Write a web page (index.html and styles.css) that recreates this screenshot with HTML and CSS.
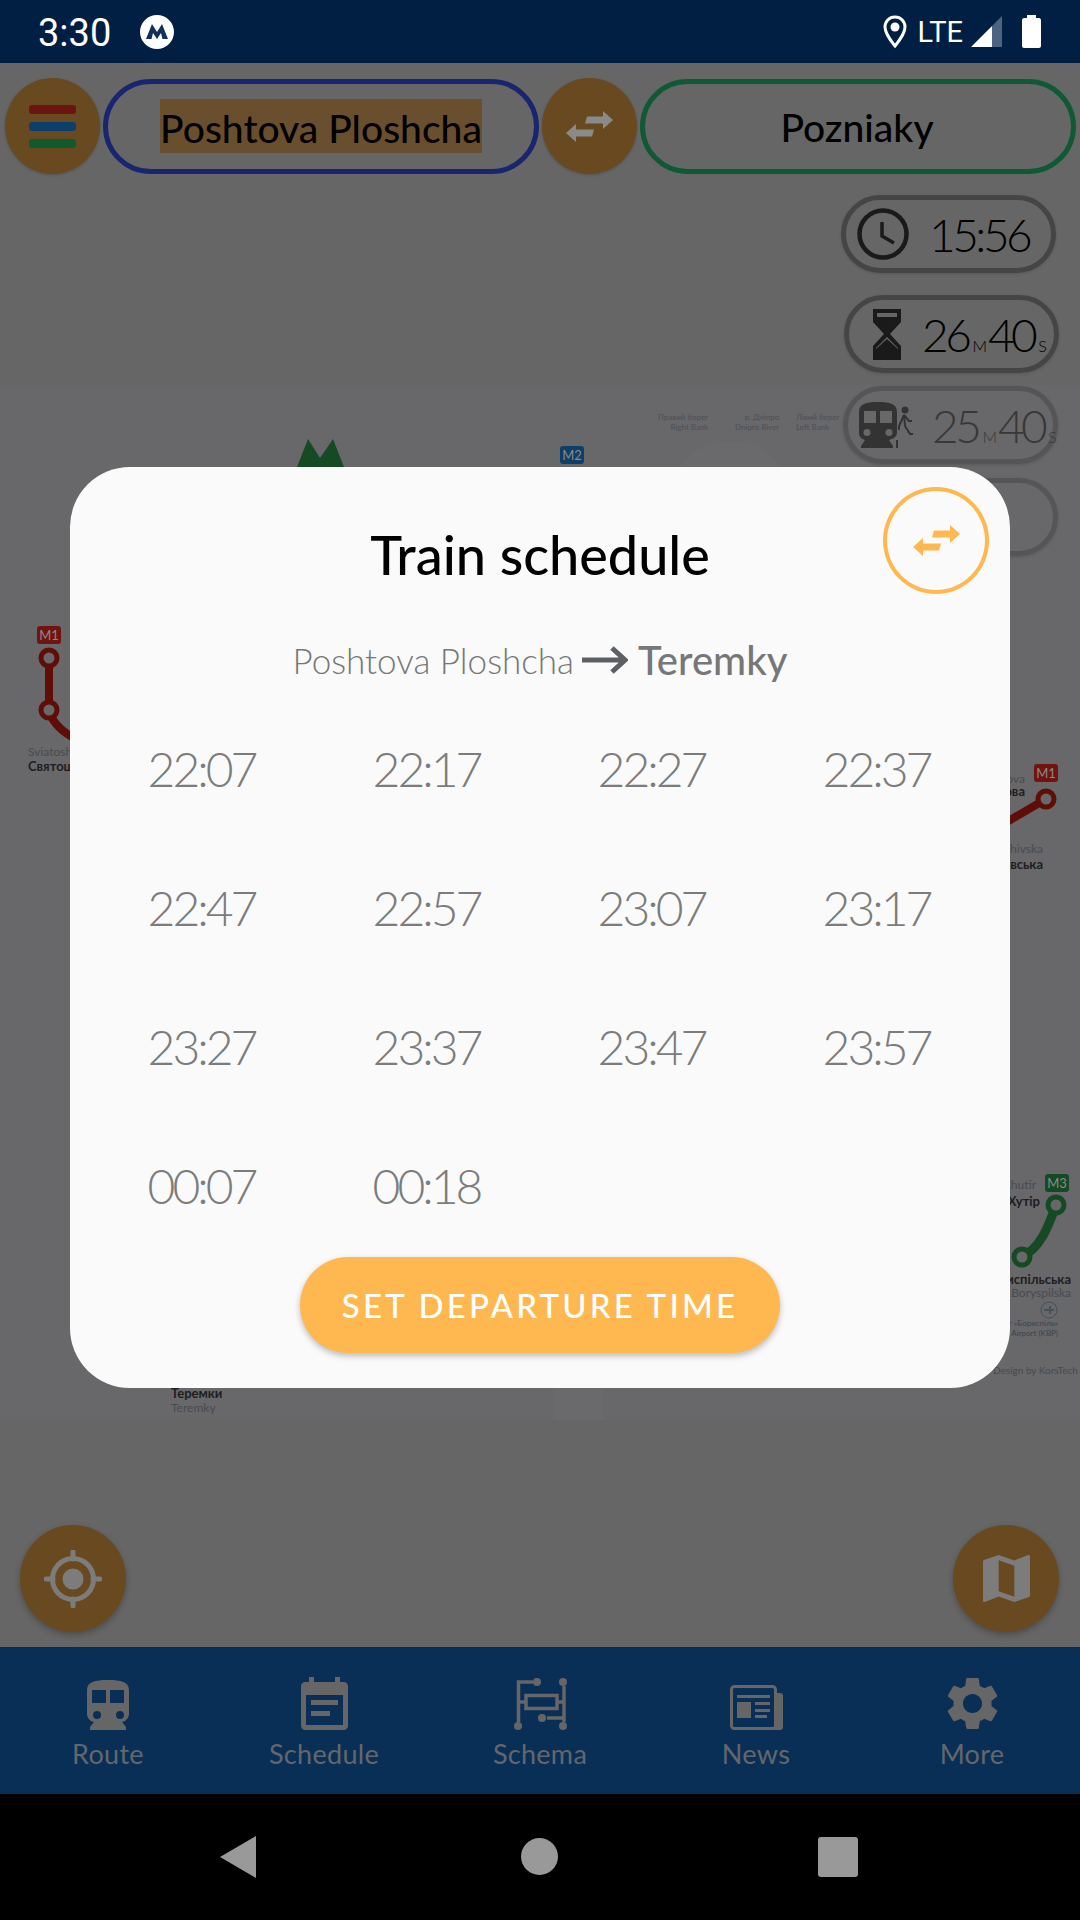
FILE: index.html
```html
<!DOCTYPE html>
<html>
<head>
  <meta charset="utf-8">
  <title>Train schedule</title>
  <link rel="stylesheet" href="styles.css">
</head>
<body>
  <!-- STATUS BAR -->
  <div class="status">
    <span class="clock">3:30</span>
    <svg class="status-logo" viewBox="0 0 34 34">
      <circle cx="17" cy="17" r="17" fill="#fff"/>
      <path d="M6 24 L12 9 L17 17 L22 9 L28 24 H22.5 L21 18 L17 24 L13 18 L11.5 24Z" fill="#12305a"/>
    </svg>
    <span class="status-space"></span>
    <svg class="status-pin" viewBox="0 0 24 34">
      <path d="M12 2C6 2 2 6.500 2 12C2 19 12 31 12 31C12 31 22 19 22 12C22 6.500 18 2 12 2Z" fill="none" stroke="#fff" stroke-width="3"/>
      <circle cx="12" cy="12" r="4.500" fill="#fff"/>
    </svg>
    <span class="lte">LTE</span>
    <svg class="status-signal" viewBox="0 0 31 31">
      <path d="M31 0V31H21V10Z" fill="#4d6480"/>
      <path d="M21 10V31H0Z" fill="#fff"/>
    </svg>
    <svg class="status-battery" viewBox="0 0 19 33">
      <path d="M5 0H14V3H17C18 3 19 4 19 5V31C19 32 18 33 17 33H2C1 33 0 32 0 31V5C0 4 1 3 2 3H5Z" fill="#fff"/>
    </svg>
  </div>

  <div class="main">
    <!-- MAP -->
    <div class="map">
      <svg class="map-lines" viewBox="0 0 1080 1584">
        <rect x="0" y="322" width="1080" height="1035" fill="#68676a"/>
        <path d="M680 404 C700 370 760 370 780 404" fill="#6a696b"/>
        <rect x="554" y="1300" width="49" height="57" fill="#6a6a6c"/>
        <path d="M297 404 L308 376 L320 395 L333 376 L344 404Z" fill="#164a24"/>
        <path d="M49 595 V647 M49 647 C52 660 62 668 72 674" fill="none" stroke="#5f0e07" stroke-width="8"/>
        <circle cx="49" cy="595" r="8" fill="#68676a" stroke="#5f0e07" stroke-width="5"/>
        <circle cx="49" cy="647" r="8" fill="#68676a" stroke="#5f0e07" stroke-width="5"/>
        <path d="M1046 736 L1005 760" fill="none" stroke="#5f0e07" stroke-width="8"/>
        <circle cx="1046" cy="736" r="8" fill="#68676a" stroke="#5f0e07" stroke-width="5"/>
        <path d="M1056 1142 C1048 1165 1040 1185 1022 1194" fill="none" stroke="#164a24" stroke-width="9"/>
        <circle cx="1056" cy="1142" r="8" fill="#68676a" stroke="#164a24" stroke-width="5"/>
        <circle cx="1022" cy="1194" r="8" fill="#68676a" stroke="#164a24" stroke-width="5"/>
        <circle cx="1049" cy="1247" r="8" fill="none" stroke="#44505c" stroke-width="1"/>
        <path d="M1044 1247 H1054 M1050 1243 V1251" stroke="#44505c" stroke-width="2"/>
      </svg>
      <span class="line-badge badge-m1a">M1</span>
      <span class="line-badge badge-m1b">M1</span>
      <span class="line-badge badge-m2">M2</span>
      <span class="line-badge badge-m3">M3</span>

      <span class="st-en st-sv-en">Sviatoshyn</span>
      <span class="st-uk st-sv-uk">Святошин</span>
      <span class="st-en st-right st-li-en">Lisova</span>
      <span class="st-uk st-right st-li-uk">Лісова</span>
      <span class="st-en st-right st-ch-en">Chernihivska</span>
      <span class="st-uk st-right st-ch-uk">Чернігівська</span>
      <span class="st-en st-right st-kh-en">Chervonyi Khutir</span>
      <span class="st-uk st-right st-kh-uk">Хутір</span>
      <span class="st-uk st-right st-bo-uk">Бориспільська</span>
      <span class="st-en st-right st-bo-en">Boryspilska</span>
      <span class="st-tiny st-right st-air-uk">Аеропорт «Бориспіль»</span>
      <span class="st-tiny st-right st-air-en">Boryspil Airport (KBP)</span>
      <span class="st-credit">Design by KorsTech</span>
      <span class="st-uk st-te-uk">Теремки</span>
      <span class="st-en st-te-en">Teremky</span>

      <span class="st-tiny st-bank bank-a">Правий берег<br>Right Bank</span>
      <span class="st-tiny st-bank bank-b">р. Дніпро<br>Dnipro River</span>
      <span class="st-tiny st-bank bank-c">Лівий берег<br>Left Bank</span>
    </div>

    <!-- TOP ROW -->
    <div class="top-row">
      <div class="round-btn menu-btn">
        <span class="bar bar-red"></span>
        <span class="bar bar-blue"></span>
        <span class="bar bar-green"></span>
      </div>
      <div class="station-pill pill-from"><span class="hl">Poshtova Ploshcha</span></div>
      <div class="round-btn">
        <svg class="swap-icon" viewBox="0 0 47 33"><path d="M21 6.500H37V1L47 10L37 19V13.500H19ZM0 23L10 14V19.500H28L26 26.500H10V32Z" fill="#8a8a8a"/></svg>
      </div>
      <div class="station-pill pill-to"><span>Pozniaky</span></div>
    </div>

    <!-- TIME PILLS -->
    <div class="info-list">
      <div class="info-pill clock-pill">
        <svg class="info-icon" viewBox="0 0 52 52">
          <circle cx="26" cy="26" r="23.500" fill="none" stroke="#1a1a1a" stroke-width="4.500"/>
          <path d="M25 14V28L37 35" fill="none" stroke="#1a1a1a" stroke-width="3.500"/>
        </svg>
        <span class="info-time">15:56</span>
      </div>
      <div class="info-pill wait-pill">
        <svg class="info-icon hourglass" viewBox="0 0 32 53">
          <path d="M2 1H30V14L19 26L30 38V52H2V38L13 26L2 14ZM6 5V9H26V5Z" fill="#1a1a1a" fill-rule="evenodd"/>
          <path d="M16 31L27 41V40L16 29L5 40V41Z" fill="#666"/>
        </svg>
        <span class="info-time">26<small>M</small>40<small>S</small></span>
      </div>
      <div class="info-pill ride-pill">
        <svg class="info-icon train-walk" viewBox="0 0 54 46">
          <path d="M19 0C7 0 0 2 0 10V31C0 35 3 37 6 38L2 44V46H34V44L30 38C33 37 38 35 38 31V10C38 2 31 0 19 0ZM5 9H17V21H5ZM21 9H33V21H21ZM8 27A3.500 3.500 0 1 1 8 34A3.500 3.500 0 1 1 8 27ZM30 27A3.500 3.500 0 1 1 30 34A3.500 3.500 0 1 1 30 27Z" fill="#333" fill-rule="evenodd"/>
          <circle cx="46" cy="8" r="3.500" fill="#333"/>
          <path d="M45 13L40 24V28M45 13L50 19H53M45 13L46 24L51 32H58M38 38V46" fill="none" stroke="#333" stroke-width="2"/>
        </svg>
        <span class="info-time dim">25<small>M</small>40<small>S</small></span>
      </div>
      <div class="info-pill extra-pill"></div>
    </div>

    <!-- FLOATING BUTTONS -->
    <div class="fab-row">
      <div class="fab">
        <svg class="fab-target" viewBox="0 0 58 58">
          <circle cx="29" cy="29" r="20.500" fill="none" stroke="#7c7c7c" stroke-width="5"/>
          <circle cx="29" cy="29" r="10.500" fill="#7c7c7c"/>
          <path d="M29 2V9M29 49V56M2 29H9M49 29H56" stroke="#7c7c7c" stroke-width="5" stroke-linecap="round"/>
        </svg>
      </div>
      <div class="fab">
        <svg class="fab-map" viewBox="3 3 18 18">
          <path d="M20.500 3l-.16.03L15 5.100 9 3 3.360 4.900c-.21.070-.36.250-.36.480V20.500c0 .28.220.5.5.5l.16-.03L9 18.900l6 2.100 5.640-1.900c.21-.070.36-.25.36-.48V3.500c0-.28-.22-.5-.5-.5zM15 19l-6-2.110V5l6 2.110V19z" fill="#7c7c7c"/>
        </svg>
      </div>
    </div>
  </div>

  <!-- BOTTOM TABS -->
  <div class="tabs">
    <div class="tab">
      <svg class="tab-icon" width="42" height="50" viewBox="0 0 42 50">
        <path d="M21 0C8 0 0 2 0 10V34C0 38 4 42 7 42L3 47V50H39V47L35 42C38 42 42 38 42 34V10C42 2 34 0 21 0ZM5 10H19V23H5ZM23 10H37V23H23ZM10 31A4 4 0 1 1 10 39A4 4 0 1 1 10 31ZM33 31A4 4 0 1 1 33 39A4 4 0 1 1 33 31Z" fill="#666" fill-rule="evenodd"/>
      </svg>
      <span>Route</span>
    </div>
    <div class="tab">
      <svg class="tab-icon" width="47" height="53" viewBox="0 0 47 53">
        <path d="M8 0H13V5H34V0H39V5H43C45 5 47 7 47 9V49C47 51 45 53 43 53H4C2 53 0 51 0 49V9C0 7 2 5 4 5H8ZM5 18V48H42V18ZM10 23H37V28H10ZM10 34H29V39H10Z" fill="#666" fill-rule="evenodd"/>
      </svg>
      <span>Schedule</span>
    </div>
    <div class="tab">
      <svg class="tab-icon" width="53" height="52" viewBox="0 0 53 52">
        <g fill="#666">
          <circle cx="23" cy="4" r="4"/><circle cx="49" cy="4" r="4"/>
          <circle cx="4" cy="48" r="4"/><circle cx="49" cy="48" r="4"/>
          <circle cx="28" cy="40" r="4"/>
        </g>
        <path d="M19 4H4.500V44M4.500 24H11M50 8V40M43 24H50M33 40H50M50 40V44" fill="none" stroke="#666" stroke-width="3.500"/>
        <rect x="12" y="17.500" width="31" height="13" fill="none" stroke="#666" stroke-width="3.500"/>
      </svg>
      <span>Schema</span>
    </div>
    <div class="tab">
      <svg class="tab-icon" width="53" height="45" viewBox="0 0 53 45">
        <rect x="1.500" y="1.500" width="44" height="42" rx="3" fill="none" stroke="#666" stroke-width="3"/>
        <path d="M46 8H50C52 8 53 9 53 11V42C53 44 52 45 50 45H44L46 41ZM7 10H40V13H7ZM7 17H21V33H7ZM25 17H40V20H25ZM25 24H40V27H25ZM25 30H37V33H25Z" fill="#666"/>
      </svg>
      <span>News</span>
    </div>
    <div class="tab">
      <svg class="tab-icon" width="51" height="53" viewBox="2.600 2 18.800 20">
        <path d="M19.140 12.940c.04-.3.060-.61.060-.94 0-.32-.02-.64-.07-.94l2.030-1.580c.18-.14.23-.41.12-.61l-1.920-3.320c-.12-.22-.37-.29-.59-.22l-2.390.96c-.5-.38-1.030-.7-1.620-.94l-.36-2.540c-.04-.24-.24-.41-.48-.41h-3.840c-.24 0-.43.17-.47.41l-.36 2.540c-.59.24-1.130.57-1.620.94l-2.390-.96c-.22-.08-.47 0-.59.22L2.740 8.870c-.12.21-.08.47.12.61l2.030 1.580c-.05.3-.09.63-.09.94s.02.64.07.94l-2.030 1.580c-.18.14-.23.41-.12.61l1.920 3.320c.12.22.37.29.59.22l2.390-.96c.5.38 1.030.7 1.620.94l.36 2.540c.05.24.24.41.48.41h3.840c.24 0 .44-.17.47-.41l.36-2.540c.59-.24 1.130-.56 1.620-.94l2.390.96c.22.08.47 0 .59-.22l1.920-3.320c.12-.22.070-.47-.12-.61l-2.010-1.580zM12 15.600c-1.980 0-3.600-1.620-3.600-3.600s1.620-3.600 3.600-3.600 3.600 1.620 3.600 3.600-1.620 3.600-3.600 3.600z" fill="#666"/>
      </svg>
      <span>More</span>
    </div>
  </div>

  <!-- SYSTEM NAV -->
  <div class="sysnav">
    <svg class="sys-back" viewBox="0 0 36 42"><path d="M36 0V42L0 21Z" fill="#999"/></svg>
    <span class="sys-home"></span>
    <span class="sys-square"></span>
  </div>

  <!-- SCHEDULE DIALOG -->
  <div class="dialog">
    <div class="dialog-swap">
      <svg class="swap-icon" viewBox="0 0 47 33"><path d="M21 6.500H37V1L47 10L37 19V13.500H19ZM0 23L10 14V19.500H28L26 26.500H10V32Z" fill="#ffb74f"/></svg>
    </div>
    <h2 class="dialog-title">Train schedule</h2>
    <div class="dialog-route">
      <span>Poshtova Ploshcha</span>
      <svg class="route-arrow" viewBox="0 0 46 30"><path d="M0 15H42M30 3L43 15L30 27" fill="none" stroke="#5c6064" stroke-width="5"/></svg>
      <strong>Teremky</strong>
    </div>
    <div class="times">
      <span>22:07</span><span>22:17</span><span>22:27</span><span>22:37</span>
      <span>22:47</span><span>22:57</span><span>23:07</span><span>23:17</span>
      <span>23:27</span><span>23:37</span><span>23:47</span><span>23:57</span>
      <span>00:07</span><span>00:18</span>
    </div>
    <div class="set-btn">SET DEPARTURE TIME</div>
  </div>
</body>
</html>
```

FILE: styles.css
```css
body {
  margin: 0;
  width: 1080px;
  height: 1920px;
  position: relative;
  display: flex;
  flex-direction: column;
  overflow: hidden;
  font-family: "Lato", sans-serif;
  background: #666;
}

/* status bar */
.status {
  height: 63px;
  background: #001f42;
  display: flex;
  align-items: center;
  padding: 0 39px 0 38px;
  color: #fff;
  font-family: "Roboto", sans-serif;
}
.clock {
  font-size: 38px;
  margin-top: 2px;
}
.status-logo {
  width: 34px;
  height: 34px;
  margin-left: 29px;
}
.status-space {
  flex: 1;
}
.status-pin {
  width: 24px;
  height: 34px;
}
.lte {
  font-size: 29px;
  margin-left: 10px;
}
.status-signal {
  width: 31px;
  height: 31px;
  margin-left: 8px;
}
.status-battery {
  width: 19px;
  height: 33px;
  margin-left: 20px;
}

/* main area */
.main {
  flex: 1;
  position: relative;
  display: flex;
  flex-direction: column;
}
.map {
  position: absolute;
  inset: 0;
}
.map-lines {
  position: absolute;
  left: 0;
  top: 0;
  width: 1080px;
  height: 1584px;
}
.line-badge {
  position: absolute;
  width: 24px;
  height: 18px;
  border-radius: 3px;
  color: #8a8a8a;
  font-size: 13px;
  line-height: 18px;
  text-align: center;
}
.badge-m1a { left: 37px; top: 563px; background: #711310; }
.badge-m1b { left: 1034px; top: 701px; background: #711310; }
.badge-m2 { left: 560px; top: 383px; background: #0e3f68; }
.badge-m3 { left: 1045px; top: 1111px; background: #164a24; }

.st-en, .st-uk, .st-tiny, .st-credit {
  position: absolute;
  white-space: nowrap;
}
.st-en {
  font-size: 12px;
  line-height: 12px;
  color: #474b50;
}
.st-uk {
  font-size: 13px;
  line-height: 12px;
  font-weight: 700;
  color: #1e1e22;
}
.st-tiny {
  font-size: 8px;
  line-height: 8px;
  color: #3c444c;
}
.st-credit {
  left: 993px;
  top: 1301px;
  font-size: 10px;
  color: #464a50;
}
.st-right {
  text-align: right;
}
.st-sv-en { left: 28px; top: 683px; }
.st-sv-uk { left: 28px; top: 697px; }
.st-li-en { right: 55px; top: 710px; }
.st-li-uk { right: 55px; top: 722px; }
.st-ch-en { right: 37px; top: 780px; }
.st-ch-uk { right: 37px; top: 795px; }
.st-kh-en { right: 44px; top: 1116px; }
.st-kh-uk { right: 40px; top: 1132px; }
.st-bo-uk { right: 9px; top: 1210px; }
.st-bo-en { right: 9px; top: 1224px; }
.st-air-uk { right: 22px; top: 1256px; }
.st-air-en { right: 22px; top: 1266px; }
.st-te-uk { left: 171px; top: 1324px; }
.st-te-en { left: 171px; top: 1339px; }
.st-bank {
  top: 349px;
  line-height: 10px;
  text-align: right;
  color: #4c5058;
}
.bank-a { left: 658px; }
.bank-b { left: 735px; }
.bank-c { left: 796px; text-align: left; }

/* top row */
.top-row {
  position: relative;
  display: flex;
  align-items: center;
  gap: 3px;
  padding: 15px 4px 0 5px;
}
.round-btn {
  width: 95px;
  height: 96px;
  flex: none;
  border-radius: 50%;
  background: #694a20;
  box-shadow: 0 1px 3px rgba(0, 0, 0, 0.2);
  display: flex;
  flex-direction: column;
  align-items: center;
  justify-content: center;
}
.menu-btn {
  gap: 8px;
}
.bar {
  width: 47px;
  height: 9px;
  border-radius: 3px;
}
.bar-red { background: #6b1510; }
.bar-blue { background: #0d3f6a; }
.bar-green { background: #115a2e; }
.swap-icon {
  width: 47px;
  height: 33px;
}
.station-pill {
  flex: 1;
  height: 95px;
  box-sizing: border-box;
  border: 5px solid;
  border-radius: 48px;
  display: flex;
  align-items: center;
  justify-content: center;
  font-size: 39px;
  font-weight: 500;
  color: #000;
}
.pill-from { border-color: #1a2570; }
.pill-to { border-color: #0f5a34; }
.pill-to span {
  padding-top: 1px;
  margin-left: -2px;
}
.hl {
  background: #6a4f2e;
  height: 54px;
  line-height: 58px;
}

/* time pills */
.info-list {
  position: relative;
  display: flex;
  flex-direction: column;
  align-items: flex-end;
  margin-top: 21px;
}
.info-pill {
  width: 215px;
  height: 78px;
  box-sizing: border-box;
  border: 5px solid #454545;
  border-radius: 40px;
  display: flex;
  align-items: center;
  box-shadow: 0 1px 3px rgba(0, 0, 0, 0.15);
}
.clock-pill { margin-right: 24px; }
.wait-pill { margin-right: 21px; margin-top: 22px; }
.ride-pill { margin-right: 22px; margin-top: 13px; border-color: #555; }
.extra-pill { margin-right: 22px; margin-top: 14px; border-color: #555; }
.info-icon {
  flex: none;
  width: 52px;
  height: 52px;
  margin-left: 11px;
}
.hourglass {
  width: 32px;
  height: 53px;
  margin-left: 22px;
}
.train-walk {
  width: 54px;
  height: 46px;
  margin-left: 11px;
}
.info-time {
  font-size: 46px;
  font-weight: 300;
  color: #000;
  margin-left: 19px;
  letter-spacing: -3.500px;
  white-space: nowrap;
}
.clock-pill .info-time {
  margin-left: 20px;
}
.info-time small {
  font-size: 16px;
  letter-spacing: 0;
  margin: 0 1px 0 4px;
}
.dim {
  color: #383838;
}

/* floating buttons */
.fab-row {
  position: relative;
  margin-top: auto;
  display: flex;
  justify-content: space-between;
  padding: 0 21px 15px 20px;
}
.fab {
  width: 106px;
  height: 107px;
  border-radius: 50%;
  background: #694a20;
  box-shadow: 0 3px 6px rgba(0, 0, 0, 0.25);
  display: flex;
  align-items: center;
  justify-content: center;
}
.fab-target {
  width: 58px;
  height: 58px;
}
.fab-map {
  width: 47px;
  height: 47px;
}

/* tabs */
.tabs {
  height: 147px;
  background: #0a2f56;
  display: grid;
  grid-template-columns: repeat(5, 216px);
}
.tab {
  display: flex;
  flex-direction: column;
  align-items: center;
  justify-content: flex-end;
  padding-bottom: 24px;
  color: #63676c;
  font-size: 27px;
  letter-spacing: 0.3px;
}
.tab-icon {
  margin-bottom: 7px;
}

/* system nav */
.sysnav {
  height: 126px;
  background: #000;
  display: grid;
  grid-template-columns: 397px 286px 1fr;
  align-items: center;
}
.sys-back {
  width: 36px;
  height: 42px;
  margin-left: 220px;
}
.sys-home {
  width: 37px;
  height: 37px;
  border-radius: 50%;
  background: #999;
  margin-left: 124px;
  margin-top: -2px;
}
.sys-square {
  width: 40px;
  height: 40px;
  border-radius: 3px;
  background: #999;
  margin-left: 135px;
}

/* dialog */
.dialog {
  position: absolute;
  left: 70px;
  top: 467px;
  width: 940px;
  height: 921px;
  box-sizing: border-box;
  border-radius: 60px;
  background: #fafafa;
  padding-top: 58px;
}
.dialog-swap {
  position: absolute;
  right: 21px;
  top: 20px;
  width: 106px;
  height: 107px;
  box-sizing: border-box;
  border: 4px solid #ffb74f;
  border-radius: 50%;
  display: flex;
  align-items: center;
  justify-content: center;
}
.dialog-title {
  margin: 0;
  text-align: center;
  font-size: 54px;
  line-height: 60px;
  font-weight: 500;
  color: #000;
}
.dialog-route {
  margin-top: 50px;
  height: 50px;
  display: flex;
  align-items: center;
  justify-content: center;
  font-size: 35px;
  font-weight: 300;
  color: #777;
}
.dialog-route strong {
  font-size: 40px;
  font-weight: 500;
}
.route-arrow {
  width: 46px;
  height: 30px;
  margin: 0 10px 0 8px;
}
.times {
  margin-top: 14px;
  padding: 0 19px;
  display: grid;
  grid-template-columns: repeat(4, 225px);
  grid-auto-rows: 139px;
  align-items: center;
  justify-items: center;
  font-size: 48px;
  font-weight: 300;
  color: #7c7c7c;
  letter-spacing: -3px;
}
.set-btn {
  position: absolute;
  left: 230px;
  top: 790px;
  width: 480px;
  height: 96px;
  border-radius: 48px;
  background: #ffb74f;
  box-shadow: 0 3px 6px rgba(0, 0, 0, 0.25);
  color: #fff;
  font-size: 33px;
  font-weight: 500;
  letter-spacing: 3.200px;
  display: flex;
  align-items: center;
  justify-content: center;
}
```
